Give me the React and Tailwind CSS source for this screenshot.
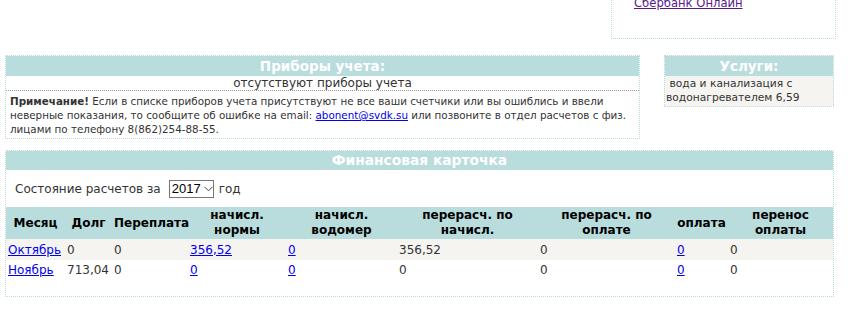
import React, { useState } from 'react';

const rows = [
  { month: 'Октябрь', debt: '0', over: '0', norm: '356,52', meter: '0', recalcCharge: '356,52', recalcPay: '0', pay: '0', transfer: '0' },
  { month: 'Ноябрь', debt: '713,04', over: '0', norm: '0', meter: '0', recalcCharge: '0', recalcPay: '0', pay: '0', transfer: '0' },
];

const Chevron = () => (
  <svg width="9" height="6" viewBox="0 0 9 6" className="ml-[3px]">
    <path d="M0.5 0.8 L4.5 4.8 L8.5 0.8" fill="none" stroke="#444" strokeWidth="1" />
  </svg>
);

export default function App() {
  const [year, setYear] = useState('2017');

  return (
    <div className="w-[850px] h-[328px] overflow-hidden bg-white font-['DejaVu_Sans','Verdana',sans-serif] text-[#333]">
      {/* pay box, top right */}
      <div className="flex justify-end pr-[14px]">
        <div className="w-[225px] h-[59px] -mt-[20px] border border-dotted border-[#b9dcdd] pl-[22px] pt-[9px]">
          <a href="#" className="text-[11.6px] leading-[15px] text-[#551a8b] underline">Сбербанк Онлайн</a>
        </div>
      </div>

      <div className="flex items-start gap-[24px] pl-[5px] mt-[16px]">
        {/* meters */}
        <div className="w-[635px] border border-dotted border-[#b9dcdd]">
          <div className="h-[20px] bg-[#b9dcdd] text-center text-white font-bold text-[13.5px] leading-[20px]">Приборы учета:</div>
          <div className="h-[15px] text-center text-[12px] leading-[15px] border-b border-dotted border-[#999]">отсутствуют приборы учета</div>
          <div className="px-[4px] pt-[3px] pb-[2px] text-[10.35px] leading-[14px]">
            <b>Примечание!</b> Если в списке приборов учета присутствуют не все ваши счетчики или вы ошиблись и ввели неверные показания, то сообщите об ошибке на email:{' '}
            <a href="#" className="text-[#0000ee] underline">abonent@svdk.su</a> или позвоните в отдел расчетов с физ. лицами по телефону 8(862)254-88-55.
          </div>
        </div>

        {/* services */}
        <div className="w-[170px] border border-dotted border-[#b9dcdd] bg-[#f6f4f1]">
          <div className="h-[20px] bg-[#b9dcdd] text-center text-white font-bold text-[13.5px] leading-[20px]">Услуги:</div>
          <div className="px-[1px] pt-[1px] pb-[1px] text-[10.7px] leading-[14px]">{'\u00a0'}вода и канализация с водонагревателем 6,59</div>
        </div>
      </div>

      {/* finance card */}
      <div className="ml-[5px] mt-[11px] w-[829px] h-[147px] border border-dotted border-[#b9dcdd]">
        <div className="h-[19px] bg-[#b9dcdd] text-center text-white font-bold text-[13.8px] leading-[19px]">Финансовая карточка</div>
        <div className="flex items-center h-[37px] pl-[9px] text-[12px]">
          <span>Состояние расчетов за</span>
          <label className="ml-[8px] flex items-center h-[18px] w-[45px] border border-[#767676] pl-[2px] font-['Liberation_Sans',sans-serif] text-[13px] text-black">
            <select value={year} onChange={(e) => setYear(e.target.value)} className="appearance-none bg-transparent outline-none">
              <option value="2017">2017</option>
              <option value="2018">2018</option>
            </select>
            <Chevron />
          </label>
          <span className="ml-[5px]">год</span>
        </div>
        <table className="table-fixed w-[827px] border-collapse text-[12px]">
          <colgroup>
            <col className="w-[59px]" />
            <col className="w-[47px]" />
            <col className="w-[76px]" />
            <col className="w-[98px]" />
            <col className="w-[111px]" />
            <col className="w-[141px]" />
            <col className="w-[137px]" />
            <col className="w-[53px]" />
            <col className="w-[105px]" />
          </colgroup>
          <thead>
            <tr className="h-[32px] bg-[#b9dcdd] text-black font-bold leading-[15px]">
              <th className="px-[2px]">Месяц</th>
              <th className="px-[2px]">Долг</th>
              <th className="px-[2px]">Переплата</th>
              <th className="px-[2px]">начисл.<br />нормы</th>
              <th className="px-[2px]">начисл.<br />водомер</th>
              <th className="px-[2px]">перерасч. по<br />начисл.</th>
              <th className="px-[2px]">перерасч. по<br />оплате</th>
              <th className="px-0">оплата</th>
              <th className="px-[2px]">перенос<br />оплаты</th>
            </tr>
          </thead>
          <tbody>
            {rows.map((r, i) => (
              <tr key={r.month} className={`${i === 0 ? 'h-[21px] bg-[#f6f4f1]' : 'h-[20px] bg-white'} text-left`}>
                <td className="px-[2px]"><a href="#" className="text-[#0000ee] underline">{r.month}</a></td>
                <td className="px-[2px]">{r.debt}</td>
                <td className="px-[2px]">{r.over}</td>
                <td className="px-[2px]"><a href="#" className="text-[#0000ee] underline">{r.norm}</a></td>
                <td className="px-[2px]"><a href="#" className="text-[#0000ee] underline">{r.meter}</a></td>
                <td className="px-[2px]">{r.recalcCharge}</td>
                <td className="px-[2px]">{r.recalcPay}</td>
                <td className="px-[2px]"><a href="#" className="text-[#0000ee] underline">{r.pay}</a></td>
                <td className="px-[2px]">{r.transfer}</td>
              </tr>
            ))}
          </tbody>
        </table>
      </div>
    </div>
  );
}
